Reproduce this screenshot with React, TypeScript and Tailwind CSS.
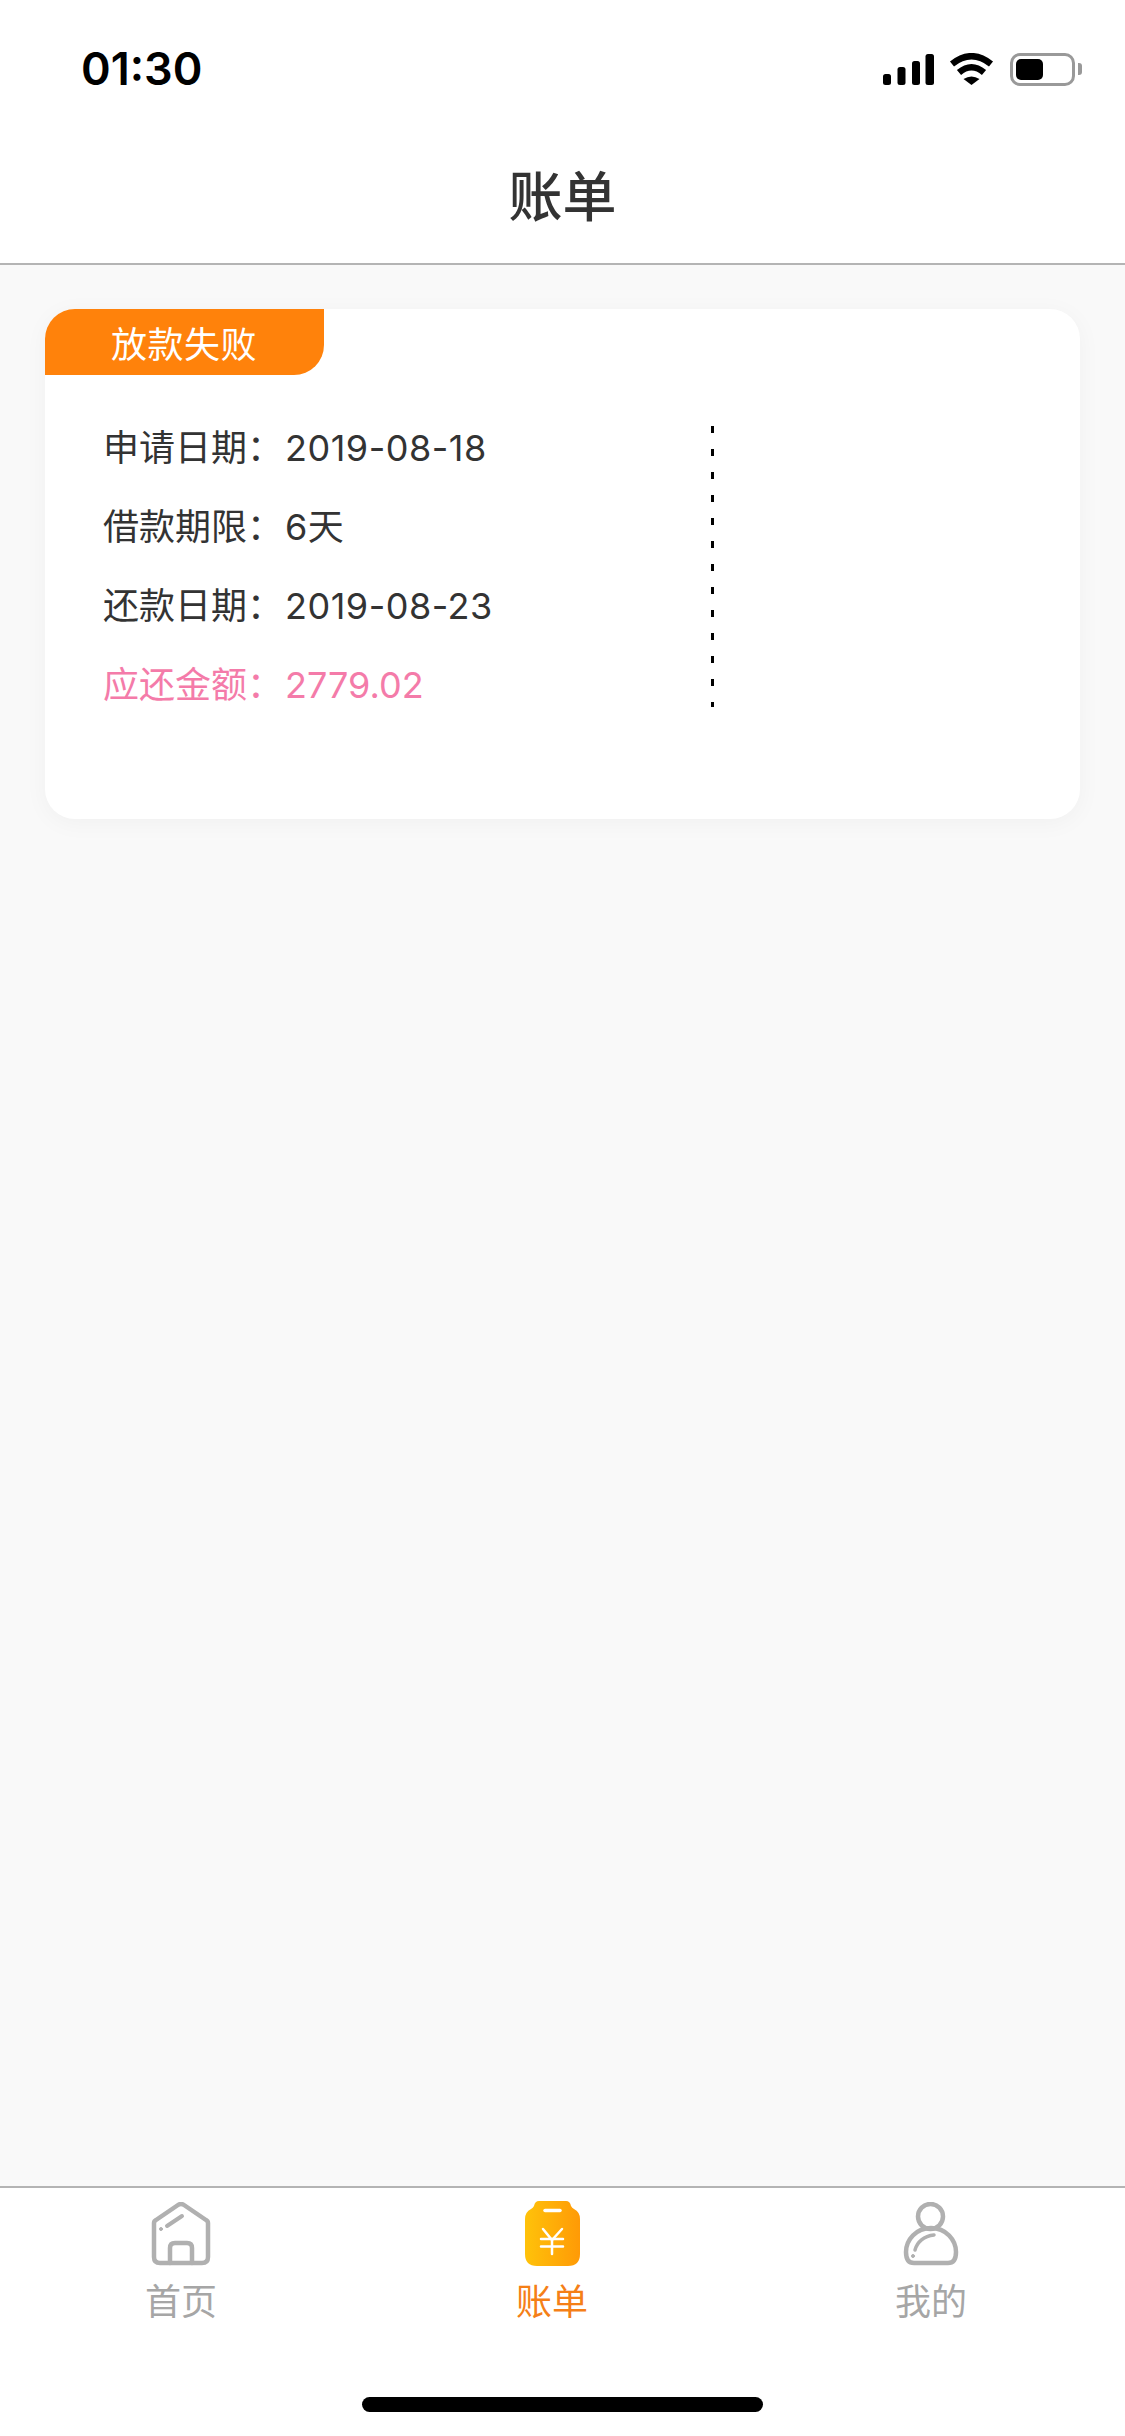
const CJK = "font-['Inter','Noto_Sans_CJK_SC',sans-serif]";

function StatusIcons() {
  return (
    <div className="flex items-center">
      <svg width="51" height="31" viewBox="0 0 51 31" fill="#000">
        <rect x="0" y="20" width="8" height="11" rx="2.5" />
        <rect x="14.5" y="13" width="8" height="18" rx="2.5" />
        <rect x="29" y="7" width="8" height="24" rx="2.5" />
        <rect x="42.5" y="0" width="8.5" height="31" rx="2.5" />
      </svg>
      <svg className="ml-[15px]" width="45" height="32" viewBox="0 0 45 32">
        <path d="M3 11 Q22.5 -4.500 42 11" fill="none" stroke="#000" strokeWidth="6.500" />
        <path d="M10 19.500 Q22.500 9 35 19.500" fill="none" stroke="#000" strokeWidth="6.500" />
        <path d="M14.500 26 Q22.500 21 30.500 26 L22.500 32 Z" fill="#000" />
      </svg>
      <div className="ml-[16px] w-[65px] h-[33px] rounded-[10px] border-[3px] border-[#999999] p-[3px]">
        <div className="w-[27px] h-full rounded-[5px] bg-black" />
      </div>
      <div className="ml-[3px] w-[4px] h-[12px] rounded-r-[3px] bg-[#999999]" />
    </div>
  );
}

function HomeIcon() {
  return (
    <svg width="60" height="64" viewBox="0 0 60 64" fill="none" stroke="#b0b0b0" strokeWidth="4.500" strokeLinecap="round" strokeLinejoin="round">
      <path d="M3 21 Q3 19 5 18 L27 3 Q30 1 33 3 L55 18 Q57 19 57 21 V55 Q57 61 51 61 H9 Q3 61 3 55 Z" />
      <path d="M19 61 V46 Q19 41 24 41 H36 Q41 41 41 46 V61" />
      <path d="M16 24 L31 14" strokeWidth="4" />
      <circle cx="10" cy="27" r="1.500" fill="#b0b0b0" strokeWidth="1" />
    </svg>
  );
}

function BillIcon() {
  return (
    <svg width="55" height="65" viewBox="0 0 55 65" fill="none">
      <defs>
        <linearGradient id="bill" x1="0" y1="0" x2="1" y2="0">
          <stop offset="0" stopColor="#ffc20a" />
          <stop offset="1" stopColor="#ff9a06" />
        </linearGradient>
      </defs>
      <path d="M14 0 H41 Q45 0 46 5 Q47 7 49 8 Q55 11 55 18 V53 Q55 65 43 65 H12 Q0 65 0 53 V18 Q0 11 6 8 Q8 7 9 5 Q10 0 14 0 Z" fill="url(#bill)" />
      <g stroke="#fff" strokeLinecap="round">
        <path d="M20 9.500 H35" strokeWidth="3.500" />
        <path d="M18 28 L27 39 L37 28" strokeWidth="2.500" />
        <path d="M16 38 H38 M16 45.500 H38 M27 39 V53" strokeWidth="2.500" />
      </g>
    </svg>
  );
}

function UserIcon() {
  return (
    <svg width="56" height="64" viewBox="0 0 56 64" fill="none" stroke="#b0b0b0" strokeWidth="4.500" strokeLinecap="round" strokeLinejoin="round">
      <circle cx="27.500" cy="14.500" r="12.500" />
      <path d="M28 26 C43 26 53 38 53 50 C53 58 50 61 45 61 H11 C6 61 3 58 3 50 C3 38 13 26 28 26 Z" />
      <path d="M31 33 C21 34 14 40 12 48" strokeWidth="3.500" />
      <circle cx="10" cy="54" r="1.500" fill="#b0b0b0" strokeWidth="1" />
    </svg>
  );
}

function Row({ label, value, pink }: { label: string; value: string; pink?: boolean }) {
  return (
    <div className={`flex items-center h-[79px] ${pink ? "text-[#f47ba9]" : "text-[#333333]"}`}>
      <span className="w-[182px] text-[36px] shrink-0">{label}：</span>
      <span className={`text-[36px] ${pink ? "tracking-normal" : "tracking-[0.5px]"}`}>{value}</span>
    </div>
  );
}

const tabs = [
  { label: "首页", icon: <HomeIcon />, cls: "ml-0 text-[#a6a6a6]" },
  { label: "账单", icon: <BillIcon />, cls: "ml-[299px] text-[#f57f17]" },
  { label: "我的", icon: <UserIcon />, cls: "ml-[307px] text-[#a6a6a6]" },
];

export default function App() {
  return (
    <div className={`w-[1125px] h-[2436px] flex flex-col bg-[#f9f9f9] ${CJK}`}>
      {/* Status bar and title */}
      <header className="bg-white h-[265px] shrink-0 border-b-2 border-[#b4b4b4]">
        <div className="h-[138px] flex items-center justify-between pl-[81px] pr-[43px]">
          <span className="text-[45px] font-semibold text-black">01:30</span>
          <StatusIcons />
        </div>
        <div className="h-[118px] flex items-center justify-center text-[54px] font-medium text-[#333333]">账单</div>
      </header>

      <main className="flex-1 px-[45px] pt-[44px]">
        <div className="relative h-[510px] bg-white rounded-[30px] overflow-hidden shadow-[0_4px_24px_rgba(0,0,0,0.04)]">
          <div className="w-[279px] h-[66px] pl-[66px] pt-[5px] flex items-center bg-[#ff820b] rounded-br-[30px] text-[36px] tracking-[0.5px] text-white">
            放款失败
          </div>
          <div className="pl-[58px] pt-[33px]">
            <Row label="申请日期" value="2019-08-18" />
            <Row label="借款期限" value="6天" />
            <Row label="还款日期" value="2019-08-23" />
            <Row label="应还金额" value="2779.02" pink />
          </div>
          {/* dashed divider */}
          <div className="absolute left-[666px] top-[117px] w-[3px] h-[281px] bg-[repeating-linear-gradient(to_bottom,#000_0,#000_7px,transparent_7px,transparent_23px)]" />
        </div>
      </main>

      {/* Tab bar */}
      <footer className="relative bg-white h-[250px] shrink-0 border-t-2 border-[#b4b4b4]">
        <nav className="flex pl-[145px] pt-[13px]">
          {tabs.map((t) => (
            <div key={t.label} className={`w-[72px] flex flex-col items-center ${t.cls}`}>
              <div className="h-[65px] flex items-end">{t.icon}</div>
              <span className="mt-[14px] text-[36px] leading-[44px] whitespace-nowrap">{t.label}</span>
            </div>
          ))}
        </nav>
        <div className="absolute left-[362px] top-[209px] w-[401px] h-[15px] rounded-full bg-black" />
      </footer>
    </div>
  );
}
